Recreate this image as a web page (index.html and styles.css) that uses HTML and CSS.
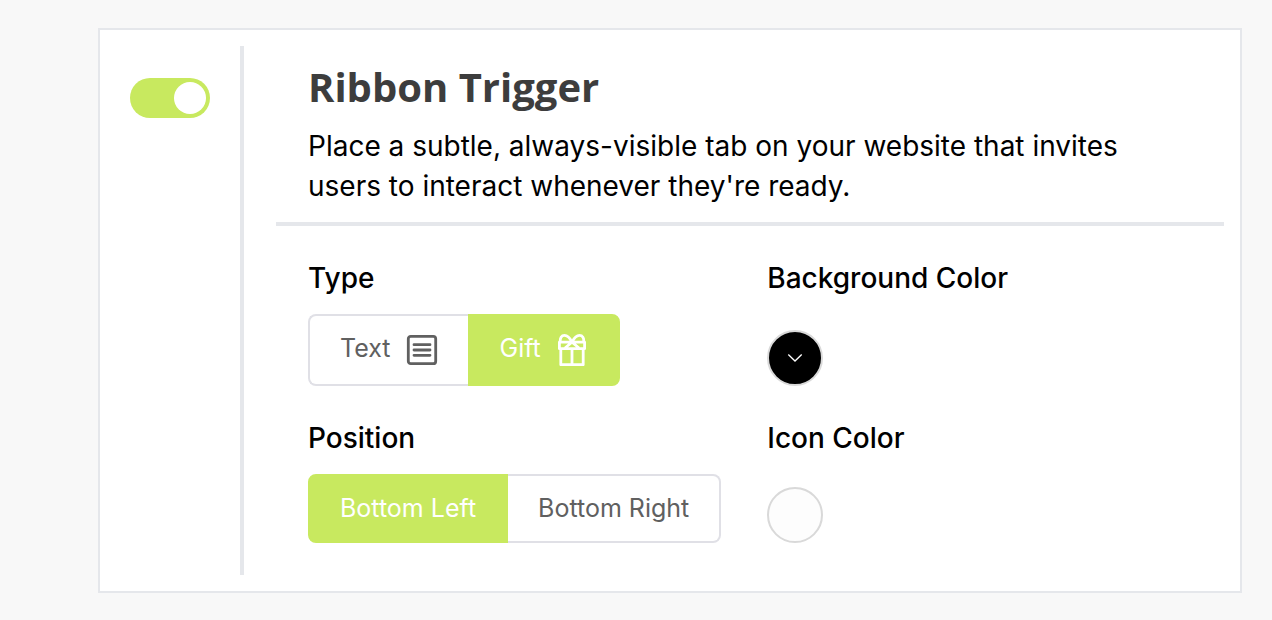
FILE: index.html
```
<!DOCTYPE html>
<html lang="en">
<head>
<meta charset="utf-8">
<meta name="viewport" content="width=device-width, initial-scale=1">
<title>Ribbon Trigger</title>
<link rel="stylesheet" href="styles.css">
</head>
<body>
<main class="card">
  <div class="toggle-column">
    <input class="switch" type="checkbox" role="switch" aria-label="Enable Ribbon Trigger" checked>
  </div>
  <section class="content">
    <header class="intro">
      <h1 class="title">Ribbon Trigger</h1>
      <p class="description">Place a subtle, always-visible tab on your website that invites users to interact whenever they're ready.</p>
    </header>
    <div class="settings">
      <div class="field" role="group" aria-labelledby="type-label">
        <h2 class="label" id="type-label">Type</h2>
        <div class="segments">
          <button class="segment segment-icon" type="button" aria-pressed="false">Text
            <svg class="icon" viewBox="0 0 32 32" fill="none" stroke="currentColor" stroke-width="2.8" stroke-linecap="round" aria-hidden="true"><rect x="2.3" y="2.3" width="27.4" height="27.4" rx="2.5"/><path d="M8 10.700h16M8 16h16M8 21.300h16"/></svg>
          </button>
          <button class="segment segment-icon selected" type="button" aria-pressed="true">Gift
            <svg class="icon" viewBox="0 0 32 32" fill="none" stroke="currentColor" stroke-width="2.8" stroke-linejoin="round" aria-hidden="true"><path d="M3.400 8.200h25.200v6.500H3.400zM4.800 14.700v16h22.400v-16M16 14.700v16M9 14 16 8.200l7 5.800M16 8.200C14 4 11.500 1.400 8.500 1.400 5.500 1.400 3.800 4 4.300 8.200M16 8.200c2-4.200 4.500-6.800 7.500-6.800s4.700 2.600 4.200 6.800"/></svg>
          </button>
        </div>
      </div>
      <div class="field color-field">
        <h2 class="label">Background Color</h2>
        <button class="swatch swatch-black" type="button" aria-label="Background Color">
          <svg class="chevron" viewBox="0 0 16 16" fill="none" stroke="currentColor" stroke-width="1.3" aria-hidden="true"><path d="m1.300 4.500 6.700 6.500 6.700-6.500"/></svg>
        </button>
      </div>
      <div class="field" role="group" aria-labelledby="position-label">
        <h2 class="label" id="position-label">Position</h2>
        <div class="segments">
          <button class="segment selected" type="button" aria-pressed="true">Bottom Left</button>
          <button class="segment" type="button" aria-pressed="false">Bottom Right</button>
        </div>
      </div>
      <div class="field color-field">
        <h2 class="label">Icon Color</h2>
        <button class="swatch swatch-white" type="button" aria-label="Icon Color"></button>
      </div>
    </div>
  </section>
</main>
</body>
</html>
```
FILE: styles.css
```
* { box-sizing: border-box; }
body {
  margin: 0;
  padding: 28px 30px 27px 98px;
  background: #f8f8f8;
  color: #000;
  font-family: Inter, "Liberation Sans", sans-serif;
}
.card {
  display: flex;
  padding: 16px;
  background: #fff;
  border: 2px solid #e5e7eb;
}
.toggle-column {
  padding: 32px 30px 0 14px;
  border-right: 4px solid #e5e7eb;
}
.switch {
  appearance: none;
  display: flex;
  justify-content: flex-end;
  width: 80px;
  height: 40px;
  margin: 0;
  padding: 4px;
  border-radius: 20px;
  background: #c8e95f;
}
.switch::before {
  content: "";
  width: 32px;
  height: 32px;
  border-radius: 50%;
  background: #fff;
}
.content { flex: 1; padding-left: 32px; }
.intro {
  padding: 16px 32px;
  border-bottom: 4px solid #e5e7eb;
}
.title {
  margin: 0 0 14px;
  color: #3d3d3d;
  font: 700 40px/50px "Open Sans", sans-serif;
}
.description { margin: 0; font-size: 28px; line-height: 40px; }
.settings {
  display: grid;
  grid-template-columns: max-content 1fr;
  gap: 32px 46px;
  padding: 32px;
}
.label { margin: 0 0 16px; font-size: 28px; font-weight: 500; line-height: 40px; }
.segments { display: flex; }
.segment {
  padding: 18px 30px;
  border: 2px solid #e0e0e6;
  background: #fff;
  color: #606060;
  font: 400 25px/29px Inter, sans-serif;
  white-space: nowrap;
}
.segment-icon { display: flex; align-items: flex-start; gap: 15px; }
.segment:first-child { border-radius: 8px 0 0 8px; border-right-width: 0; }
.segment:last-child { border-radius: 0 8px 8px 0; border-left-width: 0; }
.segment.selected { border-width: 2px; border-color: #c8e95f; background: #c8e95f; color: #fff; }
.icon { width: 32px; height: 32px; }
.color-field { display: flex; flex-direction: column; justify-content: space-between; align-items: flex-start; }
.color-field .label { margin: 0; }
.swatch {
  display: grid;
  place-items: center;
  width: 56px;
  height: 56px;
  padding: 0;
  border: 2px solid #d9d9d9;
  border-radius: 50%;
}
.swatch-black { background: #000; color: #fff; }
.swatch-white { background: #fdfdfd; }
.chevron { width: 16px; height: 16px; }
```
